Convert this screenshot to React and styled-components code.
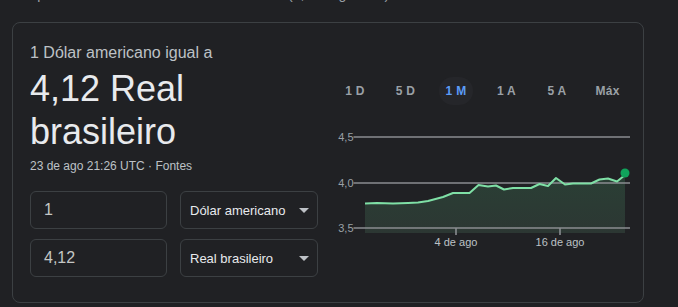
import React from 'react'
import styled, { createGlobalStyle } from 'styled-components';

const GlobalStyle = createGlobalStyle`
    html, body {
        margin: 0;
        padding: 0;
        background-color: #202124;
        font-family: "Liberation Sans", Arial, sans-serif;
        overflow: hidden;
    }
`;

const Page = styled.div`
    display: flex;
    flex-direction: column;
    width: 678px;
    height: 307px;
    background-color: #202124;
`;

const Stats = styled.div`
    margin-top: -16px;
    padding-left: 28px;
    height: 20px;
    line-height: 20px;
    font-size: 14px;
    color: #9aa0a6;
    white-space: nowrap;
`;

const Card = styled.div`
    box-sizing: border-box;
    flex: none;
    margin: 18px 0 0 12px;
    width: 632px;
    height: 281px;
    border: 1px solid #3c4043;
    border-radius: 8px;
    padding: 20px 15px 0 17px;
    display: flex;
    gap: 12px;
`;

const LeftCol = styled.div`
    width: 289px;
    display: flex;
    flex-direction: column;
`;

const Subtitle = styled.div`
    font-size: 16px;
    line-height: 20px;
    color: #bdc1c6;
`;

const Result = styled.div`
    margin-top: 4px;
    font-size: 36px;
    line-height: 43px;
    color: #e8eaed;
`;

const Meta = styled.div`
    margin-top: 5px;
    font-size: 12px;
    line-height: 16px;
    color: #bdc1c6;
`;

const Converter = styled.div`
    margin-top: 17px;
    display: grid;
    grid-template-columns: 137px 138px;
    column-gap: 13px;
    row-gap: 10px;
`;

const Field = styled.div`
    box-sizing: border-box;
    height: 38px;
    border: 1px solid #3c4043;
    border-radius: 6px;
    padding-left: 13px;
    display: flex;
    align-items: center;
    font-size: 16px;
    color: #c4c7c5;
`;

const Select = styled.div`
    box-sizing: border-box;
    height: 38px;
    border: 1px solid #3c4043;
    border-radius: 6px;
    padding: 0 8px 0 9px;
    display: flex;
    align-items: center;
    justify-content: space-between;
    font-size: 13px;
    color: #e8eaed;
`;

const Caret = styled.span`
    width: 0;
    height: 0;
    border-left: 5px solid transparent;
    border-right: 5px solid transparent;
    border-top: 5px solid #bdc1c6;
    margin-top: 1px;
`;

const RightCol = styled.div`
    flex: 1;
    display: flex;
    flex-direction: column;
`;

const Tabs = styled.div`
    margin-top: 34px;
    padding-left: 8px;
    display: flex;
    gap: 16.5px;
`;

const Tab = styled.div`
    width: 34px;
    height: 28px;
    border-radius: 14px;
    display: flex;
    align-items: center;
    justify-content: center;
    font-size: 12px;
    font-weight: bold;
    letter-spacing: 0.3px;
    white-space: nowrap;
    color: ${p => (p.$active ? '#5c9cf7' : '#9aa0a6')};
    background-color: ${p => (p.$active ? '#25262a' : 'transparent')};
`;

const Chart = styled.svg`
    display: block;
    margin-top: 18px;
    margin-left: 3px;
`;

const tabs = ['1 D', '5 D', '1 M', '1 A', '5 A', 'Máx'];

// pixel points of the 1 month series (chart coords)
const points = [
    [32, 80.5], [44, 80], [60, 80.5], [75, 80], [85, 79.5], [95, 78], [110, 74],
    [120, 70], [136.5, 70], [145.5, 62], [155, 63.5], [163, 62.5], [171, 66.5],
    [180, 65], [198, 65], [206.5, 61], [215, 63], [223, 55], [232, 61.5],
    [240, 60.5], [258, 60.5], [266.5, 56.5], [275, 55.5], [284, 58.5], [292, 52]
];

const line = points.map((p, i) => (i ? 'L' : 'M') + p[0] + ' ' + p[1]).join(' ');
const area = line + ' L292 110 L32 110 Z';

const PriceChart = () => (
    <Chart width="300" height="130" viewBox="0 0 300 130">
        <defs>
            <linearGradient id="fill" x1="0" y1="0" x2="0" y2="1">
                <stop offset="0" stopColor="#2a3f35" />
                <stop offset="1" stopColor="#2c3733" />
            </linearGradient>
        </defs>
        <path d={area} fill="url(#fill)" />
        {[14, 60, 105].map(y => (
            <line key={y} x1="20.5" x2="297" y1={y} y2={y} stroke="#8a8d91" strokeWidth="1.6" />
        ))}
        <g fill="#9aa0a6" fontSize="11" fontFamily="'Liberation Sans', Arial, sans-serif" textAnchor="end">
            <text x="20.5" y="18">4,5</text>
            <text x="20.5" y="64">4,0</text>
            <text x="20.5" y="109">3,5</text>
        </g>
        <line x1="123" x2="123" y1="105" y2="112" stroke="#8a8d91" strokeWidth="1.6" />
        <line x1="227" x2="227" y1="105" y2="112" stroke="#8a8d91" strokeWidth="1.6" />
        <g fill="#bdc1c6" fontSize="11" fontFamily="'Liberation Sans', Arial, sans-serif" textAnchor="middle">
            <text x="123" y="123">4 de ago</text>
            <text x="227" y="123">16 de ago</text>
        </g>
        <path d={line} fill="none" stroke="#7fe0a6" strokeWidth="2" strokeLinejoin="round" />
        <circle cx="292" cy="50" r="4.5" fill="#10a35b" />
    </Chart>
);

const App = () => (
    <Page>
        <GlobalStyle />
        <Stats>Aproximadamente 38.400.000 resultados (0,45 segundos)</Stats>
        <Card>
            <LeftCol>
                <Subtitle>1 Dólar americano igual a</Subtitle>
                <Result>4,12 Real brasileiro</Result>
                <Meta>23 de ago 21:26 UTC · Fontes</Meta>
                <Converter>
                    <Field>1</Field>
                    <Select>Dólar americano<Caret /></Select>
                    <Field>4,12</Field>
                    <Select>Real brasileiro<Caret /></Select>
                </Converter>
            </LeftCol>
            <RightCol>
                <Tabs>
                    {tabs.map(t => (
                        <Tab key={t} $active={t === '1 M'}>{t}</Tab>
                    ))}
                </Tabs>
                <PriceChart />
            </RightCol>
        </Card>
    </Page>
)

export default App
